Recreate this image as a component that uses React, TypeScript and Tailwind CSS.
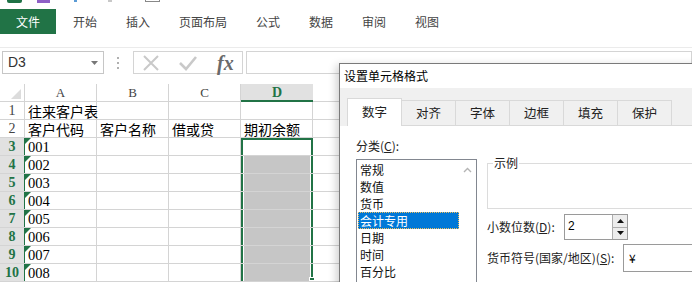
import React from "react";

const tabs = ["开始", "插入", "页面布局", "公式", "数据", "审阅", "视图"];
const ui = { fontFamily: '"Noto Sans CJK SC", "Noto Sans", sans-serif' };
const serif = { fontFamily: '"Liberation Serif", "Noto Sans CJK SC", serif' };

type Row = { n: number; a?: string; b?: string; c?: string; d?: string };

const rows: Row[] = [
  { n: 1, a: "往来客户表" },
  { n: 2, a: "客户代码", b: "客户名称", c: "借或贷", d: "期初余额" },
  { n: 3, a: "001" },
  { n: 4, a: "002" },
  { n: 5, a: "003" },
  { n: 6, a: "004" },
  { n: 7, a: "005" },
  { n: 8, a: "006" },
  { n: 9, a: "007" },
  { n: 10, a: "008" },
];

const categories = ["常规", "数值", "货币", "会计专用", "日期", "时间", "百分比"];

const Cell = ({ text, first }: { text?: string; first?: boolean }) => (
  <div className="relative w-[72px] h-full shrink-0 border-r border-[#d4d4d4] flex items-end pl-[3px]">
    {first && (
      <div className="absolute left-0 top-0 w-0 h-0 border-t-[6px] border-r-[6px] border-t-[#217346] border-r-transparent" />
    )}
    {text &&
      (/^\d/.test(text) ? (
        <span className="whitespace-nowrap text-[14.5px] leading-[16px] text-black relative z-10" style={serif}>
          {text}
        </span>
      ) : (
        <span className="whitespace-nowrap text-[14px] leading-[15px] text-black relative z-10" style={ui}>
          {text}
        </span>
      ))}
  </div>
);

const Sheet = () => (
  <div className="flex flex-col">
    {/* column headers */}
    <div className="flex h-[18px]" style={serif}>
      <div className="w-[25px] h-full border-r border-b border-[#d4d4d4] flex items-end justify-end pr-[3px] pb-[2px]">
        <svg width="10" height="10" viewBox="0 0 10 10">
          <polygon points="10,0 10,10 0,10" fill="#dcdcdc" />
        </svg>
      </div>
      {["A", "B", "C"].map((c) => (
        <div
          key={c}
          className="w-[72px] h-full border-r border-b border-[#d4d4d4] flex items-center justify-center text-[13px] text-[#444]"
        >
          {c}
        </div>
      ))}
      <div className="w-[72px] h-full bg-[#e1e1e1] border-b-2 border-[#217346] flex items-center justify-center text-[14px] font-bold text-[#217346]">
        D
      </div>
      <div className="flex-1 h-full border-b border-[#d4d4d4]" />
    </div>
    {rows.map((r) => {
      const sel = r.n >= 3;
      return (
        <div key={r.n} className="flex h-[18px] border-b border-[#d4d4d4]">
          <div
            className={
              sel
                ? "w-[25px] h-full bg-[#e1e1e1] border-r border-[#217346] flex items-center justify-center text-[14px] font-bold text-[#217346]"
                : "w-[25px] h-full border-r border-[#d4d4d4] flex items-center justify-center text-[14px] text-[#444]"
            }
            style={serif}
          >
            {r.n}
          </div>
          <Cell text={r.a} first={sel} />
          <Cell text={r.b} />
          <Cell text={r.c} />
          {sel ? (
            <div
              className={
                "relative w-[72px] h-full shrink-0 border-x-2 border-[#217346] " +
                (r.n === 3 ? "border-t-2 bg-white" : "")
              }
            >
              {r.n > 3 && <div className="h-full ml-px mr-px bg-[#c6c6c6]" />}
              {r.n === 10 && (
                <div className="absolute -right-[4px] bottom-0 w-[6px] h-[4px] bg-[#217346] border border-white" />
              )}
            </div>
          ) : (
            <Cell text={r.d} />
          )}
          <div className="flex-1 h-full" />
        </div>
      );
    })}
  </div>
);

const Dialog = () => (
  <div
    className="absolute left-[339px] top-[63px] w-[380px] h-[240px] border border-[#7a7a7a] bg-white shadow-[-3px_2px_8px_rgba(0,0,0,0.18)]"
    style={ui}
  >
    <div className="h-[24px] flex items-center pl-[4px] text-[12px] text-black">设置单元格格式</div>
    <div className="bg-[#f0f0f0] h-[38px] flex items-end pl-[7px]">
      {["数字", "对齐", "字体", "边框", "填充", "保护"].map((t, i) => (
        <div
          key={t}
          className={
            i === 0
              ? "w-[55px] h-[28px] bg-white border border-b-0 border-[#d9d9d9] flex items-center justify-center text-[12.5px] text-[#222]"
              : "w-[54px] h-[26px] border border-l-0 border-[#d9d9d9] flex items-center justify-center text-[12.5px] text-[#222]"
          }
        >
          {t}
        </div>
      ))}
      <div className="flex-1 h-px bg-[#d9d9d9]" />
    </div>
    <div className="bg-white flex pl-[16px] pt-[12px] h-full">
      <div className="w-[121px] flex flex-col">
        <div className="h-[16px] text-[12px] leading-[16px] text-[#222]">
          分类(<span className="underline">C</span>):
        </div>
        <div className="mt-[5px] h-[140px] border border-[#828790] flex p-px">
          <div className="w-[101px] flex flex-col">
            {categories.map((c) => (
              <div
                key={c}
                className={
                  c === "会计专用"
                    ? "h-[17px] pl-[2px] bg-[#0078d7] text-white text-[12px] leading-[17px] outline-1 outline-dotted outline-[#f0c060] -outline-offset-1"
                    : "h-[17px] pl-[2px] text-[#111] text-[12px] leading-[17px]"
                }
              >
                {c}
              </div>
            ))}
          </div>
          <div className="flex-1 flex justify-center pt-[6px]">
            <svg width="9" height="6" viewBox="0 0 9 6">
              <polyline points="1,5 4.5,1.5 8,5" fill="none" stroke="#b4b4b4" strokeWidth="1.4" />
            </svg>
          </div>
        </div>
      </div>
      <div className="ml-[10px] flex-1 flex flex-col">
        <div className="relative mt-[25px] h-[46px] border border-[#dcdcdc]">
          <span className="absolute left-[5px] -top-[8px] bg-white px-[1px] text-[12px] leading-[14px] text-[#222]">
            示例
          </span>
        </div>
        <div className="mt-[5px] h-[26px] flex items-center">
          <div className="w-[77px] text-[12px] text-[#222]">
            小数位数(<span className="underline">D</span>):
          </div>
          <div className="w-[64px] h-full border border-[#9a9a9a] flex">
            <div className="flex-1 pl-[3px] text-[12px] leading-[22px] text-black" style={{ fontFamily: '"Liberation Sans", sans-serif' }}>
              2
            </div>
            <div className="w-[15px] h-full flex flex-col border-l border-[#adadad] bg-[#ececec]">
              <div className="flex-1 flex items-center justify-center border-b border-[#adadad]">
                <svg width="7" height="4" viewBox="0 0 7 4">
                  <polygon points="0,4 3.5,0 7,4" fill="#111" />
                </svg>
              </div>
              <div className="flex-1 flex items-center justify-center">
                <svg width="7" height="4" viewBox="0 0 7 4">
                  <polygon points="0,0 7,0 3.5,4" fill="#111" />
                </svg>
              </div>
            </div>
          </div>
        </div>
        <div className="mt-[4px] h-[28px] flex items-center">
          <div className="w-[136px] text-[12px] text-[#222] whitespace-nowrap">
            货币符号(国家/地区)(<span className="underline">S</span>):
          </div>
          <div className="flex-1 h-full border border-[#9a9a9a] pl-[5px] text-[12px] leading-[26px] text-black">
            ¥
          </div>
        </div>
      </div>
    </div>
  </div>
);

export default function App() {
  return (
    <div className="relative w-[692px] h-[282px] overflow-hidden bg-white" style={ui}>
      {/* quick access remnants */}
      <div className="h-[9px] flex items-start">
        <div className="ml-[7px] w-[15px] h-[3px] bg-[#1e7145] rounded-b-[2px]" />
        <div className="ml-[15px] w-[13px] h-[3px] bg-[#8e5fc6]" />
        <div className="ml-[24px] w-[3px] h-[2px] bg-[#5b9bd5]" />
        <div className="ml-[31px] w-[4px] h-[2px] bg-[#c8c8c8]" />
        <div className="ml-[33px] w-[15px] h-[2px] border-x border-b border-[#888]" />
      </div>
      {/* ribbon tabs */}
      <div className="h-[25px] flex items-center">
        <div className="w-[56px] h-full bg-[#217346] text-white text-[12px] flex items-center justify-center">
          文件
        </div>
        <div className="ml-[17px] flex gap-[29px] text-[12px] text-[#444]">
          {tabs.map((t) => (
            <span key={t}>{t}</span>
          ))}
        </div>
      </div>
      <div className="h-[14px] border-b border-[#ebebeb]" />
      {/* formula bar */}
      <div className="h-[36px] flex items-start pt-[3px]">
        <div className="ml-[2px] w-[102px] h-[23px] border border-[#c6c6c6] flex items-center justify-between pl-[5px] pr-[5px]">
          <span className="text-[14px] text-[#333]" style={{ fontFamily: '"Liberation Sans", sans-serif' }}>
            D3
          </span>
          <svg width="7" height="4" viewBox="0 0 7 4">
            <polygon points="0,0 7,0 3.5,4" fill="#777" />
          </svg>
        </div>
        <div className="ml-[13px] mt-[6px] flex flex-col gap-[3px]">
          <div className="w-[2px] h-[2px] bg-[#b0b0b0]" />
          <div className="w-[2px] h-[2px] bg-[#b0b0b0]" />
          <div className="w-[2px] h-[2px] bg-[#b0b0b0]" />
        </div>
        <div className="ml-[14px] w-[110px] h-[23px] border border-[#d4d4d4] flex items-center">
          <svg className="ml-[8px]" width="18" height="16" viewBox="0 0 18 16">
            <path d="M2 1 L16 15 M16 1 L2 15" stroke="#c9c9c9" strokeWidth="2" fill="none" />
          </svg>
          <svg className="ml-[19px]" width="18" height="16" viewBox="0 0 18 16">
            <path d="M1 8 L7 14 L17 2" stroke="#c9c9c9" strokeWidth="2.6" fill="none" />
          </svg>
          <span className="ml-[20px] text-[20px] italic font-bold text-[#6a6a6a] leading-none" style={serif}>
            fx
          </span>
        </div>
        <div className="ml-[3px] flex-1 h-[23px] border border-[#d4d4d4]" />
      </div>
      <Sheet />
      <Dialog />
    </div>
  );
}
